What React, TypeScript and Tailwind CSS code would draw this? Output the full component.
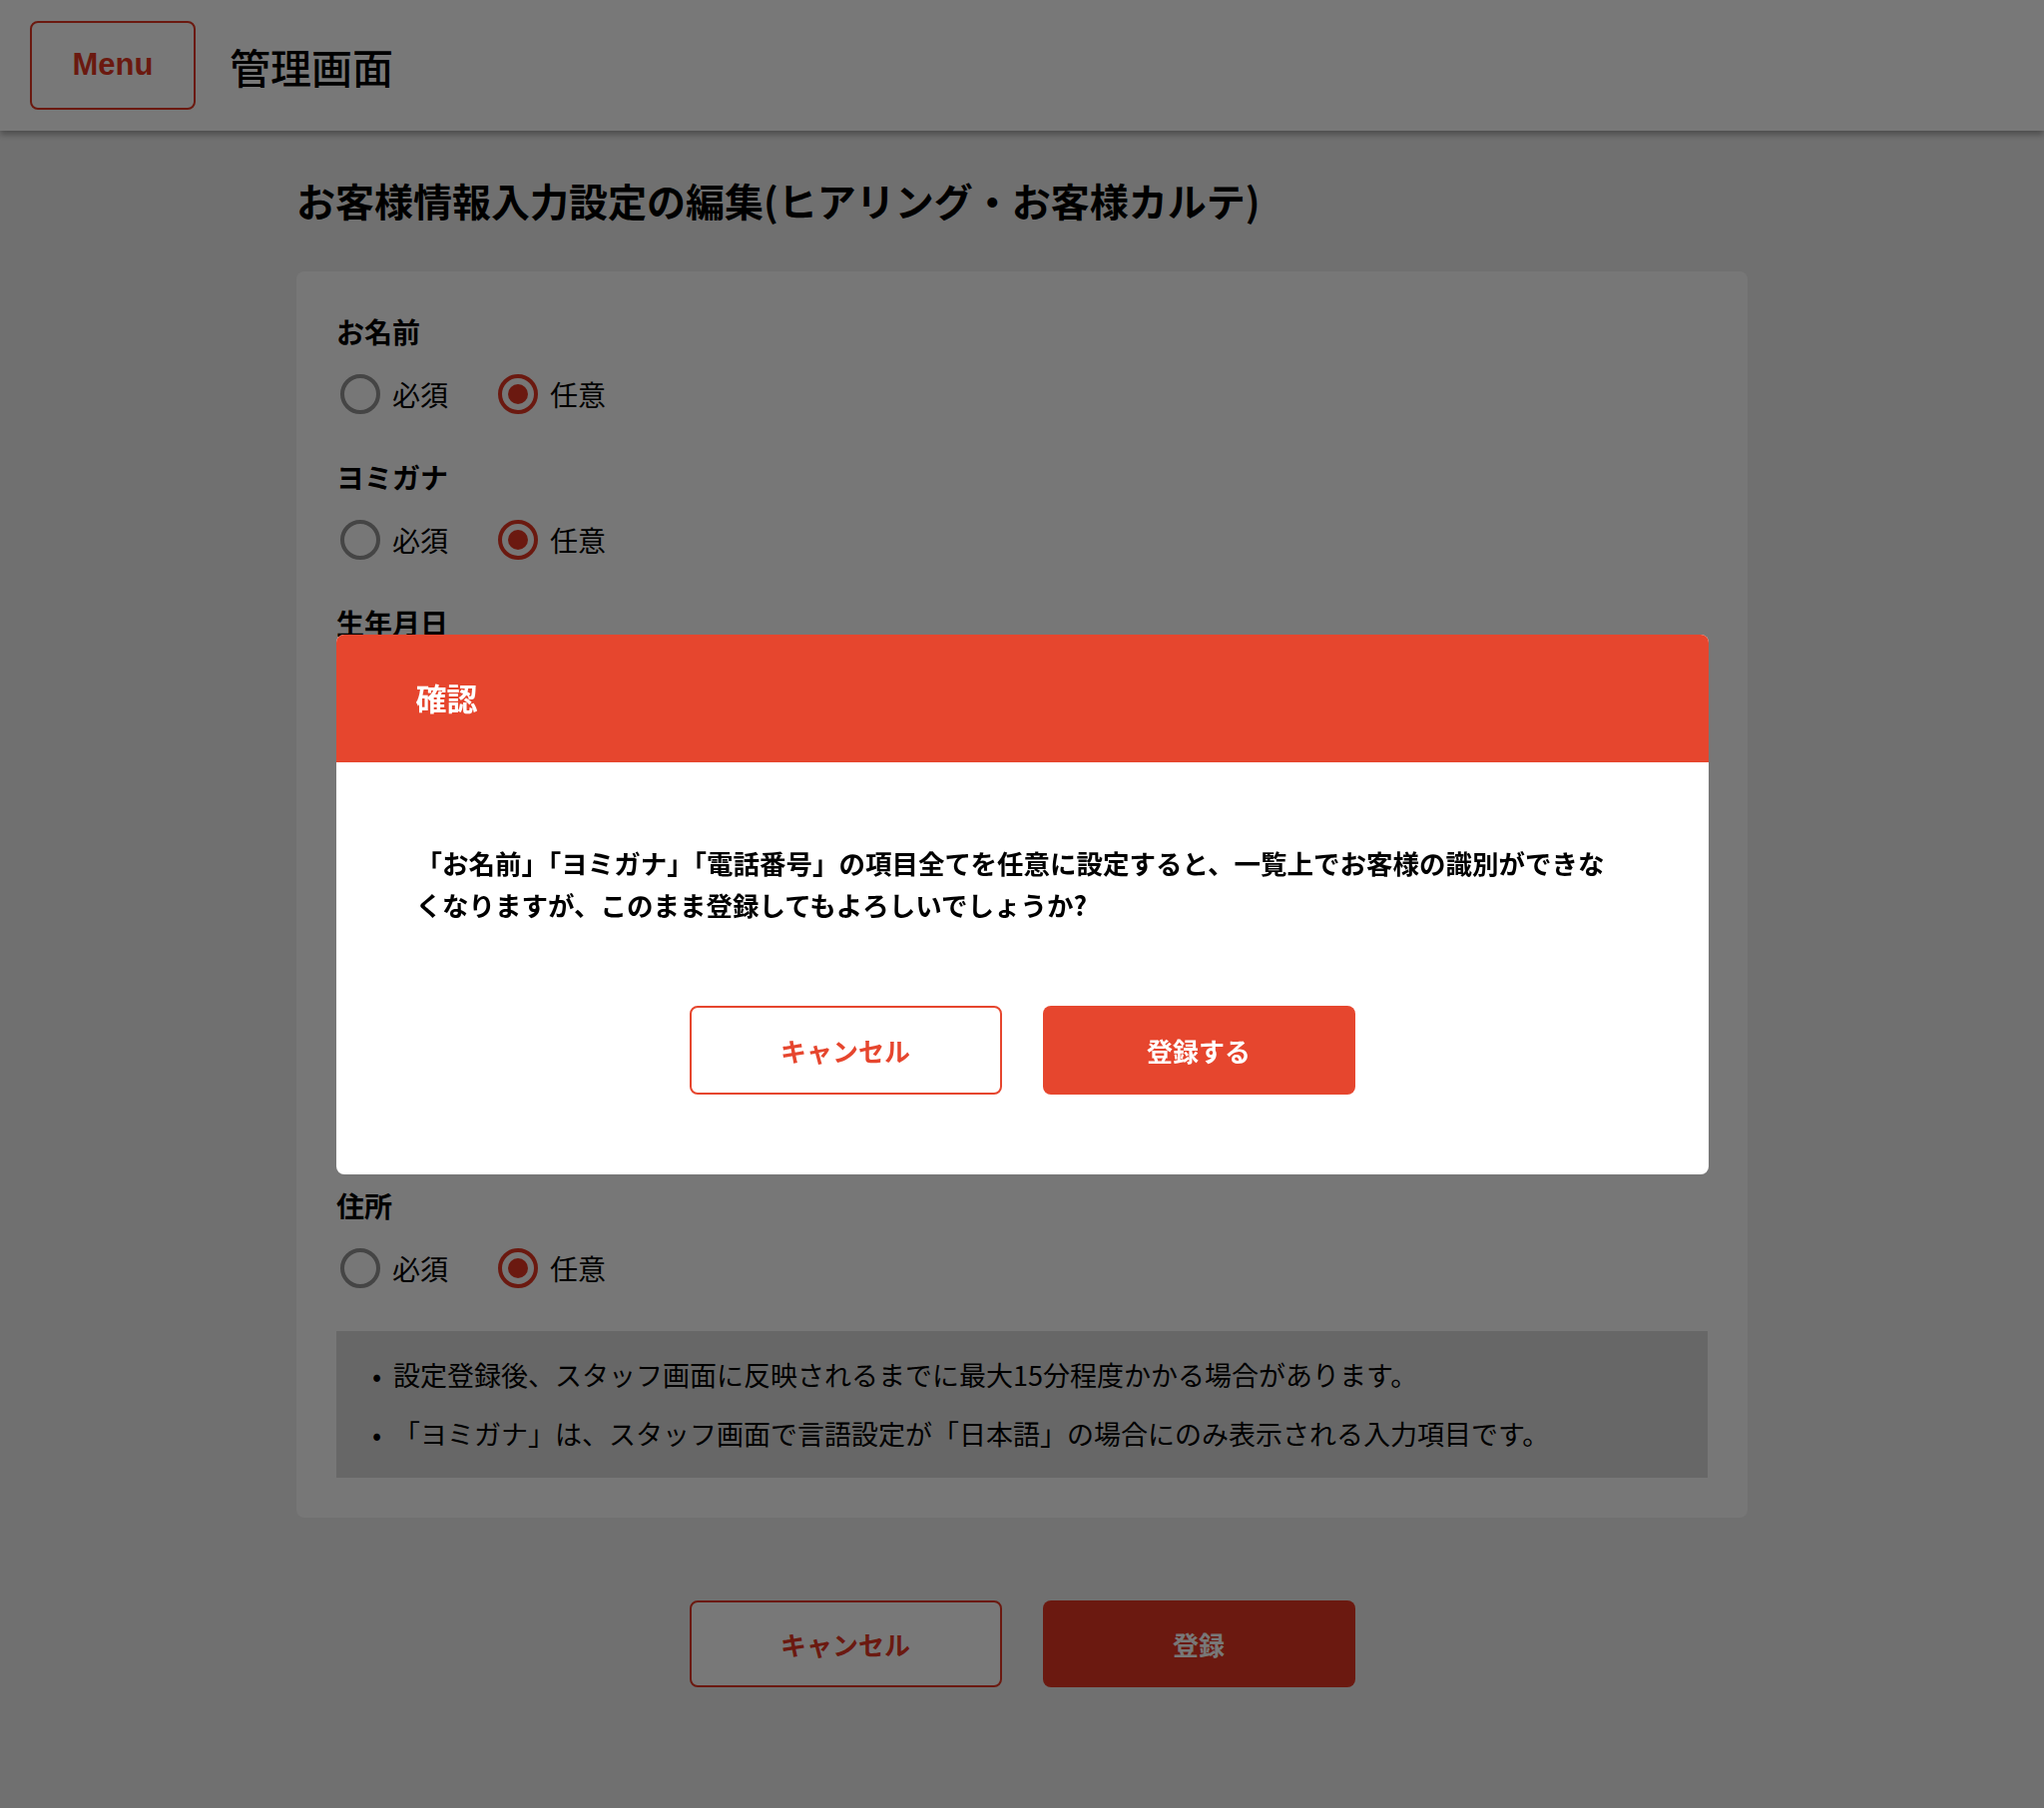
import React from "react";

function Radio({ checked, label }: { checked: boolean; label: string }) {
  return (
    <label className="flex items-center">
      {checked ? (
        <span className="w-10 h-10 rounded-full border-4 border-[#e43722] flex items-center justify-center">
          <span className="w-5 h-5 rounded-full bg-[#e43722]" />
        </span>
      ) : (
        <span className="w-10 h-10 rounded-full border-4 border-[#929292]" />
      )}
      <span className="ml-3 text-[28px] leading-[40px] text-black">{label}</span>
    </label>
  );
}

function Group({ label }: { label: string }) {
  return (
    <div className="flex flex-col">
      <div className="text-[28px] leading-[40px] font-bold text-black">{label}</div>
      <div className="flex items-center mt-[23px] ml-1 gap-[50px]">
        <Radio checked={false} label="必須" />
        <Radio checked={true} label="任意" />
      </div>
    </div>
  );
}

export default function App() {
  const groups = ["お名前", "ヨミガナ", "生年月日", "性別", "電話番号", "メールアドレス", "住所"];
  return (
    <div className="min-h-screen bg-[#eeeeee] font-['Noto_Sans_CJK_JP','Noto_Sans',sans-serif] text-black">
      <header className="relative z-10 h-[131px] bg-white flex items-center px-[30px] shadow-[0_4px_6px_rgba(0,0,0,0.3)]">
        <button className="w-[166px] h-[89px] rounded-[8px] border-2 border-[#e43722] bg-white text-[#e43722] text-[31px] font-bold font-['Liberation_Sans',sans-serif]">
          Menu
        </button>
        <h1 className="ml-[34px] text-[41px] leading-[52px] font-medium">管理画面</h1>
      </header>

      <main className="w-[1454px] mx-auto pb-[122px]">
        <h2 className="mt-[45px] text-[39px] leading-[48px] font-bold">
          お客様情報入力設定の編集(ヒアリング・お客様カルテ)
        </h2>

        <section className="mt-[48px] bg-[#fcfcfc] rounded-[8px] px-[40px] pt-[40px] pb-[40px]">
          <div className="flex flex-col gap-[43px]">
            {groups.map((g) => (
              <Group key={g} label={g} />
            ))}
          </div>
          <ul className="mt-[43px] bg-[#dbdbdb] pl-[36px] pr-[36px] pt-[24px] pb-[24px] flex flex-col gap-[19px]">
            <li className="flex text-[27px] leading-[40px]">
              <span className="w-[21px] shrink-0">•</span>
              <span>設定登録後、スタッフ画面に反映されるまでに最大15分程度かかる場合があります。</span>
            </li>
            <li className="flex text-[27px] leading-[40px]">
              <span className="w-[21px] shrink-0">•</span>
              <span>「ヨミガナ」は、スタッフ画面で言語設定が「日本語」の場合にのみ表示される入力項目です。</span>
            </li>
          </ul>
        </section>

        <div className="mt-[83px] flex justify-center gap-[41px]">
          <button className="w-[313px] h-[87px] rounded-[8px] border-2 border-[#e43722] bg-white text-[#e43722] text-[26px] font-bold">
            キャンセル
          </button>
          <button className="w-[313px] h-[87px] rounded-[8px] bg-[#e43722] text-white text-[26px] font-bold">
            登録
          </button>
        </div>
      </main>

      <div className="fixed inset-0 z-20 bg-black/[0.53] flex items-center justify-center">
        <div className="w-[1375px] bg-white rounded-[8px] overflow-hidden">
          <div className="h-[128px] bg-[#e6462e] px-[80px] flex items-center">
            <span className="text-white text-[31px] font-bold">確認</span>
          </div>
          <div className="px-[80px] py-[80px]">
            <p className="text-[26.5px] leading-[42px] font-bold text-black">
              「お名前」「ヨミガナ」「電話番号」の項目全てを任意に設定すると、一覧上でお客様の識別ができな
              <br />
              くなりますが、このまま登録してもよろしいでしょうか?
            </p>
            <div className="mt-[80px] flex justify-center gap-[41px]">
              <button className="w-[313px] h-[89px] rounded-[8px] border-2 border-[#e6462e] bg-white text-[#e6462e] text-[26px] font-bold">
                キャンセル
              </button>
              <button className="w-[313px] h-[89px] rounded-[8px] bg-[#e6462e] text-white text-[26px] font-bold">
                登録する
              </button>
            </div>
          </div>
        </div>
      </div>
    </div>
  );
}
